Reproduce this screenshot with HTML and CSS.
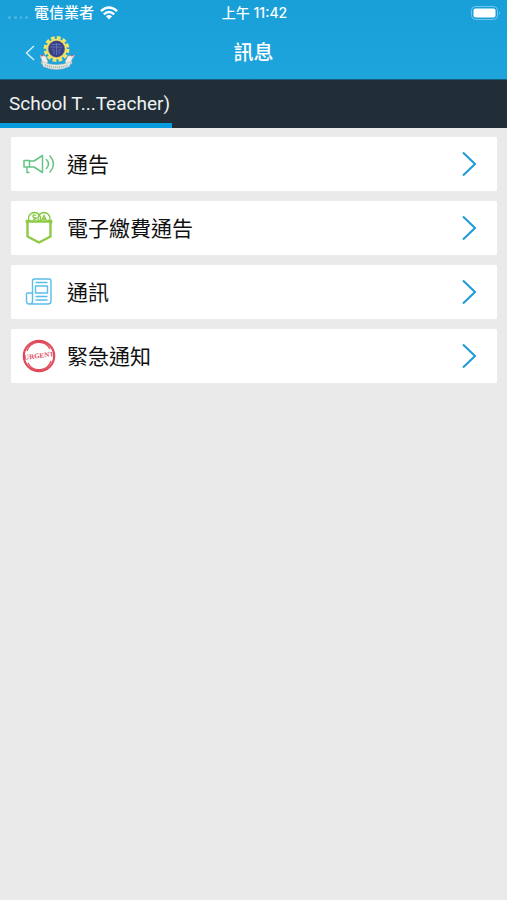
FILE: index.html
```html
<!DOCTYPE html>
<html lang="zh-Hant">
<head>
<meta charset="utf-8">
<meta name="viewport" content="width=device-width, initial-scale=1">
<title>訊息</title>
<link rel="stylesheet" href="styles.css">
</head>
<body>
<header class="header">
  <div class="status">
    <div class="carrier">
      <span class="signal" aria-hidden="true"><i></i><i></i><i></i><i></i></span>
      <span>電信業者</span>
      <svg class="wifi" viewBox="0 0 18 14" aria-hidden="true">
        <g fill="none" stroke="#fff" stroke-width="2.4">
          <path d="M.9 5.2Q9-2.2 17.1 5.2"/>
          <path d="M3.8 8.3Q9 3.6 14.2 8.3"/>
        </g>
        <path d="M5.9 10.2Q9 7.6 12.1 10.2L9 13.4Z" fill="#fff"/>
      </svg>
    </div>
    <time class="clock">上午 11:42</time>
    <svg class="battery" viewBox="0 0 30 14" aria-hidden="true">
      <rect x=".5" y=".5" width="26" height="13" rx="4" fill="none" stroke="#72c5ec"/>
      <rect x="2.5" y="2.5" width="22" height="9" rx="2" fill="#fff"/>
      <path d="M28 5q1.6 2 0 4Z" fill="#8fd0f0"/>
    </svg>
  </div>
  <div class="navbar">
    <a class="back" href="#" aria-label="返回">
      <svg class="back-arrow" viewBox="0 0 10 16"><path d="M9 1 1.500 8 9 15" fill="none" stroke="#d9f0fb" stroke-width="1.4"/></svg>
      <svg class="crest" viewBox="0 0 38 36">
        <circle cx="18.500" cy="14" r="11.400" fill="none" stroke="#f1e468" stroke-width="3" stroke-dasharray="3.800 2.170"/>
        <circle cx="18.500" cy="14" r="9.600" fill="#d8bd45" stroke="#f3e56c" stroke-width="1.500"/>
        <circle cx="18.500" cy="14" r="8.200" fill="#37428f"/>
        <path d="M12.500 12h12M14 9.500h9M18.500 8v12M14 14l2 1v4M23 14l-2 1v4" fill="none" stroke="#7479ac" stroke-width=".8"/>
        <path d="M2 20.500 7.500 21l2.500 6-3 3-4-1.500 1-3ZM36.500 20.500 30 21l-3 6 3 3 4-1.500-.500-3.500Z" fill="#f1f0ef" stroke="#b9a8a6" stroke-width=".6"/>
        <path d="M4 26.500Q18.500 33 33 26.500L31.500 31.500Q18.500 37.500 5 31.500Z" fill="#e2eae5" stroke="#a5afa9" stroke-width=".5"/>
        <path d="M7 30Q18.500 34.500 30 30" fill="none" stroke="#9db0a6" stroke-width="1.400" stroke-dasharray="1.200 .8"/>
        <circle cx="4" cy="20.500" r="1" fill="#bd5968"/><circle cx="34" cy="20.500" r="1" fill="#bd5968"/>
      </svg>
    </a>
    <h1 class="title">訊息</h1>
  </div>
</header>
<nav class="tabs"><a class="tab" href="#" aria-current="page">School T...Teacher)</a></nav>
<main class="list">
  <a class="card" href="#">
    <svg class="icon" viewBox="0 0 34 34" aria-hidden="true">
      <g fill="none" stroke="#65c485" stroke-width="1.500" stroke-linejoin="round" stroke-linecap="round">
        <path d="M2 13.500h5.500v6.500H2ZM7.500 14h4.500L20.500 8.500v17L12 20H7.500M5 20v5.500h2"/>
        <path d="M24.500 12.500q4 4.500 0 9M28 9q7 8 0 16"/>
      </g>
    </svg>
    <span class="label">通告</span>
    <svg class="chevron" viewBox="0 0 16 26" aria-hidden="true"><path d="M2 1.500 14 13 2 24.500"/></svg>
  </a>
  <a class="card" href="#">
    <svg class="icon" viewBox="0 0 34 34" aria-hidden="true">
      <g fill="none" stroke="#85c63d" stroke-width="1.300">
        <circle cx="12.500" cy="7.500" r="6"/><circle cx="22" cy="7.500" r="6"/>
        <path d="M14 4.500q-3-1.500-3 .5t2.500 2-2.500 2M19.500 9.500l2.500-5 2.500 5M20.500 8h3"/>
      </g>
      <path d="M5.500 10.500H28.500V25.500L17 31.500 5.500 25.500Z" fill="#fff" stroke="#8dca45" stroke-width="2.400" stroke-linejoin="round"/>
      <path d="M4.500 12.500V9.500h4M29.500 12.500V9.500h-4" fill="none" stroke="#8dca45" stroke-width="1.500"/>
    </svg>
    <span class="label">電子繳費通告</span>
    <svg class="chevron" viewBox="0 0 16 26" aria-hidden="true"><path d="M2 1.500 14 13 2 24.500"/></svg>
  </a>
  <a class="card" href="#">
    <svg class="icon" viewBox="0 0 34 34" aria-hidden="true">
      <g fill="none" stroke="#5bbdea" stroke-width="1.400" stroke-linejoin="round">
        <path d="M10.500 26V6q0-2 2-2H27q2 0 2 2V26q0 3-3 3H7q-2.500 0-2.500-3V19q0-1 1-1h5M10.500 26q0 3-2.500 3"/>
        <path d="M13.500 11h12v7h-12ZM13.500 7.500h12M13.500 21.500h12M13.500 25h12"/>
      </g>
    </svg>
    <span class="label">通訊</span>
    <svg class="chevron" viewBox="0 0 16 26" aria-hidden="true"><path d="M2 1.500 14 13 2 24.500"/></svg>
  </a>
  <a class="card" href="#">
    <svg class="icon" viewBox="0 0 34 34" aria-hidden="true">
      <g fill="none" stroke="#e04b5c">
        <circle cx="17" cy="17" r="15.200" stroke-width="2.200"/>
        <path d="M5 12a12.500 12.500 0 0 1 23-2M29 22a12.500 12.500 0 0 1-23 2" stroke-width="1.300"/>
      </g>
      <text class="stamp" x="17" y="19" text-anchor="middle" transform="rotate(-7 17 17)">URGENT</text>
    </svg>
    <span class="label">緊急通知</span>
    <svg class="chevron" viewBox="0 0 16 26" aria-hidden="true"><path d="M2 1.500 14 13 2 24.500"/></svg>
  </a>
</main>
</body>
</html>
```
FILE: styles.css
```css
* { box-sizing: border-box; }
body {
  margin: 0;
  min-height: 100vh;
  background: #eaeaea;
  color: #111;
  font-family: Inter, "Noto Sans CJK TC", sans-serif;
}
a { color: inherit; text-decoration: none; }
svg { display: block; flex: none; }

.header {
  height: 80px;
  color: #fff;
  background: linear-gradient(#189fd8, #1fa5de);
  border-bottom: 1px solid #165e7c;
}
.status {
  display: grid;
  grid-template-columns: 1fr auto 1fr;
  align-items: center;
  height: 26px;
  padding: 0 6px 0 8px;
  font-size: 14px;
  line-height: 20px;
  font-weight: 500;
}
.carrier { display: flex; align-items: center; gap: 6px; font-size: 15px; }
.signal { display: flex; gap: 3px; width: 20px; padding-top: 8px; }
.signal i { width: 3px; height: 3px; border-radius: 50%; background: #4fb4e2; }
.wifi { width: 18px; height: 14px; }
.battery { width: 30px; height: 14px; justify-self: end; }

.navbar {
  display: grid;
  grid-template-columns: 1fr auto 1fr;
  align-items: center;
  height: 53px;
  padding: 0 25px;
}
.back { display: flex; align-items: center; gap: 3px; }
.back-arrow { width: 10px; height: 16px; }
.crest { width: 38px; height: 36px; }
.title { margin: 0; font-size: 20px; line-height: 28px; font-weight: 500; }

.tabs { display: flex; height: 48px; background: #212e37; }
.tab {
  width: 34%;
  padding: 10px 0 0 9px;
  border-bottom: 5px solid #069cdd;
  color: #eef2f4;
  font-family: Roboto, "Noto Sans CJK TC", sans-serif;
  font-size: 19px;
  line-height: 28px;
  white-space: nowrap;
}

.list { display: flex; flex-direction: column; gap: 10px; padding: 9px 10px 10px 11px; }
.card {
  display: flex;
  align-items: center;
  height: 54px;
  padding: 0 20px 0 11px;
  background: #fff;
}
.icon { width: 34px; height: 34px; }
.label { flex: 1; padding: 2px 0 0 11px; font-size: 21px; line-height: 30px; }
.chevron { width: 16px; height: 26px; fill: none; stroke: #1a9bd7; stroke-width: 2; }
.stamp { font: 700 7px "Liberation Serif", serif; fill: #e04b5c; }
```
